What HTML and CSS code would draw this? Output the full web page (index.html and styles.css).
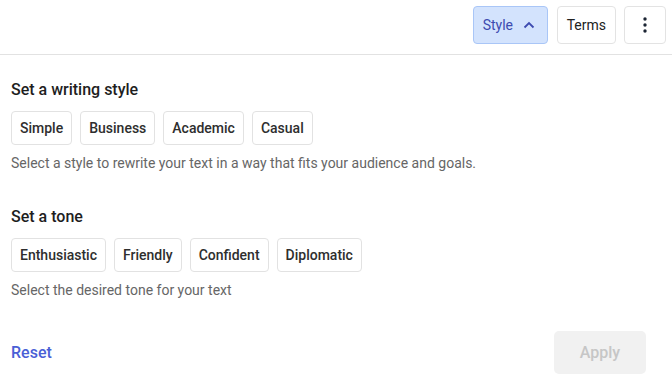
FILE: index.html
```html
<!DOCTYPE html>
<html lang="en">
<head>
    <meta charset="UTF-8">
    <meta name="viewport" content="width=device-width, initial-scale=1.0">
    <title>Writing style</title>
    <link rel="stylesheet" href="styles.css">
</head>
<body>
    <div class="toolbar">
        <button class="tool-btn active">Style
            <svg class="chev" width="12" height="8" viewBox="0 0 12 8"><path d="M1.5 6.5 L6 2 L10.5 6.5" fill="none" stroke="currentColor" stroke-width="1.8"/></svg>
        </button>
        <button class="tool-btn">Terms</button>
        <button class="tool-btn more">
            <svg width="4" height="16" viewBox="0 0 4 16"><circle cx="2" cy="2" r="1.7"/><circle cx="2" cy="8" r="1.7"/><circle cx="2" cy="14" r="1.7"/></svg>
        </button>
    </div>

    <div class="panel">
        <h3 class="title">Set a writing style</h3>
        <div class="chips">
            <button class="chip">Simple</button>
            <button class="chip">Business</button>
            <button class="chip">Academic</button>
            <button class="chip">Casual</button>
        </div>
        <p class="hint">Select a style to rewrite your text in a way that fits your audience and goals.</p>

        <h3 class="title second">Set a tone</h3>
        <div class="chips">
            <button class="chip">Enthusiastic</button>
            <button class="chip">Friendly</button>
            <button class="chip">Confident</button>
            <button class="chip">Diplomatic</button>
        </div>
        <p class="hint">Select the desired tone for your text</p>

        <div class="footer">
            <a class="reset" href="#">Reset</a>
            <button class="apply" disabled>Apply</button>
        </div>
    </div>
</body>
</html>
```
FILE: styles.css
```css
body {
    margin: 0;
    font-family: Roboto, 'Liberation Sans', sans-serif;
    background: #fff;
    color: #222;
}
button {
    font-family: inherit;
    cursor: pointer;
}
.toolbar {
    display: flex;
    justify-content: flex-end;
    gap: 8px;
    height: 55px;
    padding: 6px 6px 0 0;
    box-sizing: border-box;
    border-bottom: 1px solid #e2e2e2;
}
.tool-btn {
    height: 38px;
    padding: 0 9px;
    display: flex;
    align-items: center;
    gap: 10px;
    background: #fff;
    border: 1px solid #e3e3e3;
    border-radius: 4px;
    font-size: 14px;
    color: #222;
}
.tool-btn.active {
    background: #d3e3fd;
    border-color: #a9c6f7;
    color: #3d4bb0;
    width: 75px;
    margin-right: 1px;
}
.tool-btn.more {
    width: 42px;
    justify-content: center;
    color: #1c2533;
    fill: #1c2533;
}
.panel {
    padding: 25px 11px 0 11px;
}
.title {
    margin: 0;
    font-size: 16px;
    font-weight: 500;
    line-height: 20px;
    color: #1e1e1e;
}
.title.second {
    margin-top: 34px;
}
.chips {
    display: flex;
    gap: 8px;
    margin-top: 11px;
}
.chip {
    height: 34px;
    padding: 0 8px;
    background: #fff;
    border: 1px solid #e2e2e2;
    border-radius: 4px;
    font-size: 14px;
    font-weight: 500;
    color: #2e2e2e;
}
.hint {
    margin: 8px 0 0;
    font-size: 14px;
    line-height: 20px;
    color: #666;
}
.footer {
    display: flex;
    justify-content: space-between;
    align-items: center;
    margin-top: 31px;
    padding-right: 15px;
}
.reset {
    color: #4a5fd6;
    font-size: 16px;
    font-weight: 500;
    text-decoration: none;
}
.apply {
    width: 92px;
    height: 43px;
    background: #f1f1f1;
    border: none;
    border-radius: 5px;
    color: #c6c6c6;
    font-size: 16px;
    font-weight: 500;
    cursor: default;
}
```
